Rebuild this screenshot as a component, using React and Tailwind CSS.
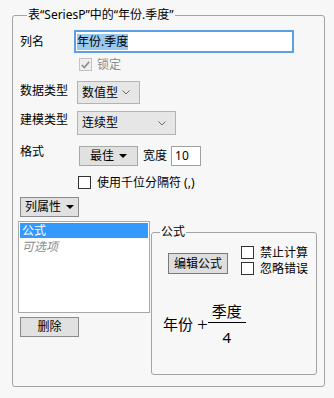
import React from "react";

const Chevron = () => (
  <svg width="8" height="5" viewBox="0 0 8 5" className="shrink-0">
    <path d="M0.5 0.5 L4 4 L7.5 0.5" fill="none" stroke="#6a6a6a" strokeWidth="1" />
  </svg>
);

const Caret = () => (
  <svg width="8" height="4" viewBox="0 0 8 4" className="shrink-0">
    <path d="M0 0 H8 L4 4 Z" fill="#000" />
  </svg>
);

const Box = ({ className = "" }) => (
  <div className={"w-[13px] h-[13px] border border-[#333] bg-white shrink-0 " + className} />
);

export default function App() {
  return (
    <div className="w-[334px] h-[398px] bg-[#f7f7f7] pt-[7px] pl-[12px] text-[12px] leading-[16px] text-black font-['Noto_Sans','Noto_Sans_CJK_SC',sans-serif]">
      <fieldset className="w-[313px] h-[380px] border border-[#a3a3a3] rounded-[3px] pl-[7px] pt-[7px]">
        <legend className="ml-[7px] px-[1px]">表“SeriesP”中的“年份.季度”</legend>

        {/* 列名 */}
        <div className="flex items-center h-[23px]">
          <div className="w-[54px]">列名</div>
          <div className="w-[220px] h-[23px] border-2 border-[#5c9fe6] bg-white flex items-center pl-[1px]">
            <span className="bg-[#99c9ef]">年份.季度</span>
          </div>
        </div>

        {/* 锁定 */}
        <div className="flex items-center mt-[5px] ml-[59px] h-[13px]">
          <div className="w-[13px] h-[13px] border border-[#c4c4c4] bg-[#eeeeee] flex items-center justify-center">
            <svg width="9" height="8" viewBox="0 0 9 8">
              <path d="M0.8 4 L3.3 6.6 L8.2 0.8" fill="none" stroke="#8c8c8c" strokeWidth="1.6" />
            </svg>
          </div>
          <span className="ml-[5px] text-[#8a8a8a]">锁定</span>
        </div>

        {/* 数据类型 */}
        <div className="flex items-center mt-[10px] h-[23px]">
          <div className="w-[57px] -mt-[3px]">数据类型</div>
          <div className="w-[63px] h-[23px] border border-[#b3b3b3] bg-[#e6e6e6] flex items-center justify-between pl-[4px] pr-[9px]">
            <span>数值型</span>
            <Chevron />
          </div>
        </div>

        {/* 建模类型 */}
        <div className="flex items-center mt-[7px] h-[24px]">
          <div className="w-[57px] -mt-[6px]">建模类型</div>
          <div className="w-[99px] h-[24px] border border-[#b3b3b3] bg-[#e6e6e6] flex items-center justify-between pl-[4px] pr-[9px]">
            <span>连续型</span>
            <Chevron />
          </div>
        </div>

        {/* 格式 */}
        <div className="flex items-center mt-[11px] h-[20px]">
          <div className="w-[59px] -mt-[8px]">格式</div>
          <div className="w-[59px] h-[20px] border border-[#a8a8a8] bg-[#e1e1e1] flex items-center justify-center gap-[5px]">
            <span>最佳</span>
            <Caret />
          </div>
          <span className="ml-[5px]">宽度</span>
          <div className="ml-[4px] w-[30px] h-[20px] border border-[#a0a0a0] bg-white flex items-center pl-[3px]">10</div>
        </div>

        {/* 千位分隔符 */}
        <div className="flex items-center mt-[10px] ml-[58px] h-[13px]">
          <Box />
          <span className="ml-[6px]">使用千位分隔符 (,)</span>
        </div>

        {/* lower */}
        <div className="flex mt-[8px]">
          <div className="w-[133px] -ml-[2px] flex flex-col">
            <div className="ml-[2px] w-[59px] h-[20px] border border-[#8a8a8a] bg-[#e1e1e1] flex items-center justify-center gap-[5px]">
              <span>列属性</span>
              <Caret />
            </div>
            <div className="mt-[4px] w-[132px] h-[92px] border border-[#a9a9a9] bg-white p-[1px]">
              <div className="h-[15px] bg-[#3399ff] text-white pl-[2px] leading-[15px]">公式</div>
              <div className="h-[15px] leading-[15px] mt-[1px] italic text-[#8c8c8c] pl-[2px]">可选项</div>
            </div>
            <div className="mt-[4px] ml-[2px] w-[59px] h-[20px] border border-[#8a8a8a] bg-[#e1e1e1] flex items-center justify-center">
              删除
            </div>
          </div>

          <fieldset className="mt-[27px] w-[166px] h-[151px] border border-[#a3a3a3] rounded-[3px] pl-[16px]">
            <legend className="ml-[-8px] px-[1px]">公式</legend>
            <div className="flex mt-[6px]">
              <div className="mt-[7px] w-[60px] h-[21px] border border-[#7a7a7a] bg-[#dedede] flex items-center justify-center">
                编辑公式
              </div>
              <div className="ml-[13px] flex flex-col gap-[3px]">
                <div className="flex items-center h-[13px]">
                  <Box />
                  <span className="ml-[6px]">禁止计算</span>
                </div>
                <div className="flex items-center h-[13px]">
                  <Box />
                  <span className="ml-[6px]">忽略错误</span>
                </div>
              </div>
            </div>

            <div className="flex items-center mt-[27px] -ml-[5px] text-[15px] leading-[18px]">
              <span>年份</span>
              <span className="ml-[4px] text-[19px] leading-[18px] font-light">+</span>
              <div className="flex flex-col items-center w-[38px]">
                <span className="mb-[2px]">季度</span>
                <div className="w-[38px] h-[1px] bg-black" />
                <span className="mt-[5px]">4</span>
              </div>
            </div>
          </fieldset>
        </div>
      </fieldset>
    </div>
  );
}
